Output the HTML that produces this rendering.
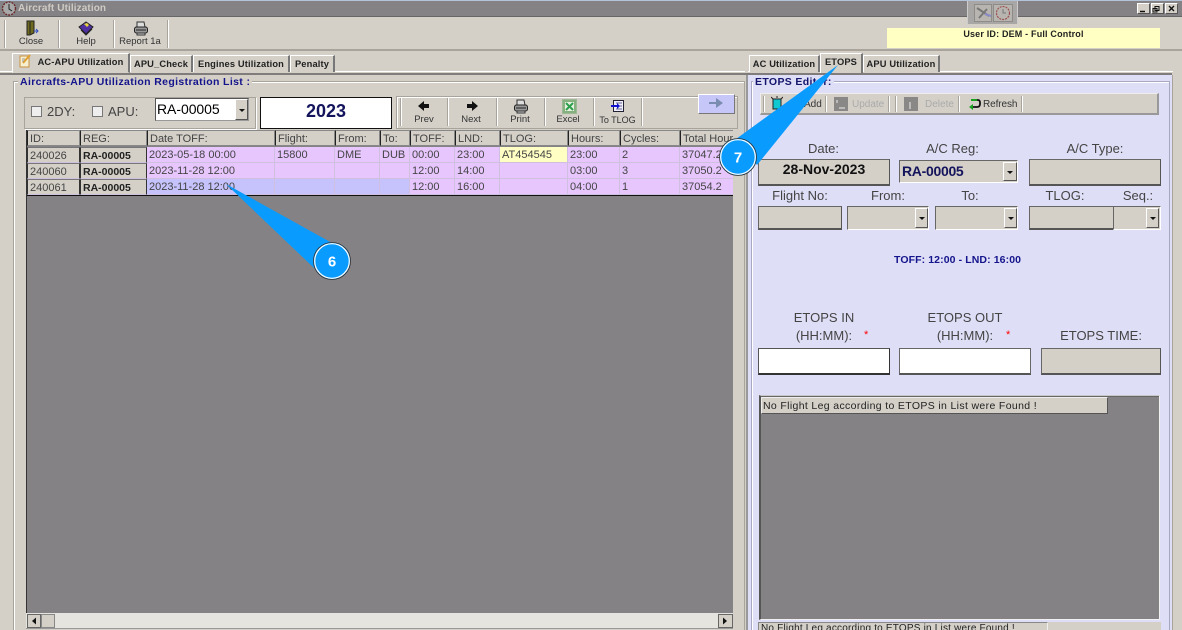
<!DOCTYPE html>
<html><head><meta charset="utf-8"><style>
html,body{margin:0;padding:0;width:1182px;height:630px;overflow:hidden}
body{background:#d4d0c8;font-family:"Liberation Sans",sans-serif;color:#333}
#w{position:absolute;left:0;top:0;width:1182px;height:630px;overflow:hidden;background:#d4d0c8}
div,svg{position:absolute}
.t{white-space:nowrap;line-height:12px}
.tb{font-size:9.5px;color:#333;text-align:center;white-space:nowrap;line-height:12px}
.tab{font-size:9.3px;font-weight:bold;color:#222;white-space:nowrap;background:#d4d0c8;border-top:1px solid #fff;border-left:1px solid #fff;border-right:2px solid #777;box-sizing:border-box;text-align:center;line-height:17px;letter-spacing:.15px}
.sep{width:1px;background:#a8a49c;border-right:1px solid #fff}
.h{top:130px;height:16px;background:#d4d0c8;font-size:11px;line-height:16px;color:#444;padding-left:2px;box-sizing:border-box;border-top:1px solid #888;border-left:1px solid #222;border-bottom:1px solid #888;border-right:1px solid #888;white-space:nowrap;overflow:hidden}
.c{height:16px;font-size:11px;line-height:16px;color:#444;padding-left:2px;box-sizing:border-box;background:#e6c6fd;border-right:1px solid #d0c0e0;border-bottom:1px solid #d0c0e0;white-space:nowrap;overflow:hidden}
.g{background:#d4d0c8;border-top:1px solid #777;border-left:1px solid #333;border-right:1px solid #333}
.l{font-size:13px;color:#444;white-space:nowrap;line-height:14px;text-align:center}
.box{background:#d4d0c8;border:1px solid #666;border-right-color:#555;border-bottom:2px solid #555;box-sizing:border-box}
.cb{background:#d4d0c8;border-top:1px solid #666;border-left:1px solid #666;border-right:1px solid #fff;border-bottom:1px solid #fff;box-sizing:border-box}
.ar{background:#d4d0c8;border-top:1px solid #fff;border-left:1px solid #fff;border-right:1px solid #555;border-bottom:1px solid #555;box-sizing:border-box}
.ar:after{content:"";position:absolute;left:50%;top:50%;margin-left:-3px;margin-top:-1px;border-left:3px solid transparent;border-right:3px solid transparent;border-top:3px solid #111}
.wb{background:#d4d0c8;border-top:1px solid #fff;border-left:1px solid #fff;border-right:1px solid #555;border-bottom:1px solid #555;box-sizing:border-box}
</style></head><body><div id="w">
<!-- title bar -->
<div style="left:0;top:0;width:1182px;height:1px;background:#b4c4d8"></div>
<div style="left:0;top:1px;width:1182px;height:15px;background:#848284"></div>
<div style="left:0;top:16px;width:1182px;height:1px;background:#666"></div>
<svg style="left:1px;top:1px" width="16" height="15" viewBox="0 0 16 15"><circle cx="8" cy="7.5" r="6.5" fill="#a8a8a8" stroke="#6a2a2a" stroke-width="1.4" stroke-dasharray="2 1"/><path d="M8 3V8L11 10" stroke="#222" fill="none"/></svg>
<div class="t" style="left:18px;top:3px;font-size:10px;font-weight:bold;color:#cfcbc4;letter-spacing:.1px">Aircraft Utilization</div>
<div style="left:967px;top:1px;width:51px;height:23px;background:#a9a7a6;border-right:1px solid #ccc;border-left:1px solid #ccc;box-sizing:border-box"></div>
<div style="left:974px;top:4px;width:18px;height:18px;background:#b8b5b0;border:1px solid #8e8c88;box-sizing:border-box"></div>
<div style="left:993px;top:4px;width:20px;height:18px;background:#b8b5b0;border:1px solid #8e8c88;box-sizing:border-box"></div>
<svg style="left:975px;top:5px" width="40" height="16" viewBox="0 0 40 16"><path d="M2 3L14 11M12 4L4 13" stroke="#777" stroke-width="2"/><path d="M10 9L16 11" stroke="#8a8ac8" stroke-width="2"/><circle cx="28" cy="8" r="6.5" fill="none" stroke="#9a5050" stroke-width="1.2" stroke-dasharray="2 1"/><path d="M28 4V8H31" stroke="#777" fill="none"/></svg>
<div class="wb" style="left:1137px;top:3px;width:13px;height:11px"></div>
<div class="wb" style="left:1151px;top:3px;width:13px;height:11px"></div>
<div class="wb" style="left:1165px;top:3px;width:13px;height:11px"></div>
<svg style="left:1137px;top:3px" width="41" height="11" viewBox="0 0 41 11"><path d="M3 8.5H8" stroke="#111" stroke-width="1.5"/><path d="M18 3.5h4v4h-4zM16 5.5h4v3.5h-4z" fill="#d4d0c8" stroke="#111"/><path d="M32 3L37 8M37 3L32 8" stroke="#111" stroke-width="1.4"/></svg>

<!-- main toolbar -->
<div class="sep" style="left:4px;top:20px;height:28px"></div>
<div class="sep" style="left:58px;top:20px;height:28px"></div>
<div class="sep" style="left:113px;top:20px;height:28px"></div>
<div class="sep" style="left:167px;top:20px;height:28px"></div>
<svg style="left:24px;top:20px" width="15" height="16" viewBox="0 0 15 16"><path d="M3 1H10V13L6 15H3Z" fill="#6e6a20" stroke="#222"/><path d="M6 2V14" stroke="#222"/><path d="M10 11L14 11M12 9L14 11L12 13" stroke="#3050c0" fill="none"/></svg>
<svg style="left:78px;top:21px" width="16" height="15" viewBox="0 0 16 15"><path d="M1 6L8 1L15 6L8 13Z" fill="#5030a0" stroke="#222"/><path d="M6 3L9 6L11 4L9 2Z" fill="#e8d040"/><path d="M3 9L8 14L14 8" stroke="#222" fill="none"/></svg>
<svg style="left:133px;top:21px" width="16" height="15" viewBox="0 0 16 15"><path d="M4 1H11L12 6H4Z" fill="#ddd" stroke="#333"/><rect x="1.500" y="6" width="13" height="6" rx="2" fill="#999" stroke="#222"/><path d="M3 9H13" stroke="#222"/><path d="M4 12H12V14H4Z" fill="#ccc" stroke="#333"/></svg>
<div class="tb" style="left:15px;top:36px;width:32px">Close</div>
<div class="tb" style="left:70px;top:36px;width:32px">Help</div>
<div class="tb" style="left:114px;top:36px;width:52px">Report 1a</div>
<div style="left:0;top:49px;width:1182px;height:2px;background:#a8a49c"></div>
<div style="left:887px;top:28px;width:273px;height:20px;background:#ffffc4"></div>
<div class="t" style="left:887px;top:28px;width:273px;text-align:center;font-size:9px;font-weight:bold;color:#222;letter-spacing:.18px">User ID: DEM - Full Control</div>

<!-- lines -->
<div style="left:0;top:71px;width:745px;height:1px;background:#fff"></div>
<div style="left:0;top:73px;width:1172px;height:2px;background:#807c7c"></div>
<div style="left:748px;top:71px;width:425px;height:1px;background:#fff"></div>

<!-- left tabs -->
<div class="tab" style="left:12px;top:53px;width:118px;height:20px;border-bottom:1px solid #d4d0c8;padding-left:20px;line-height:16px">AC-APU Utilization</div>
<svg style="left:19px;top:54px" width="13" height="14" viewBox="0 0 13 14"><rect x="1" y="2" width="9" height="11" fill="#f6efd0" stroke="#c89040"/><path d="M4 9L11 1" stroke="#e0a030" stroke-width="2"/><path d="M3 5H6M3 7H5" stroke="#999"/></svg>
<div class="tab" style="left:130px;top:55px;width:63px;height:17px">APU_Check</div>
<div class="tab" style="left:193px;top:55px;width:97px;height:17px">Engines Utilization</div>
<div class="tab" style="left:290px;top:55px;width:45px;height:17px">Penalty</div>

<!-- right tabs -->
<div class="tab" style="left:749px;top:55px;width:71px;height:17px">AC Utilization</div>
<div class="tab" style="left:820px;top:53px;width:43px;height:20px;line-height:16px">ETOPS</div>
<div class="tab" style="left:863px;top:55px;width:77px;height:17px">APU Utilization</div>

<!-- left group -->
<div style="left:13px;top:81px;width:732px;height:560px;border:1px solid #a8a49c;box-sizing:border-box;box-shadow:inset 1px 1px 0 #fff"></div>
<div class="t" style="left:18px;top:76px;padding:0 2px;background:#d4d0c8;font-size:10.5px;font-weight:bold;color:#14148c;letter-spacing:.36px;line-height:13px">Aircrafts-APU Utilization Registration List :</div>

<!-- filter panel -->
<div style="left:24px;top:97px;width:232px;height:32px;border:1px solid #a8a49c;box-sizing:border-box;box-shadow:1px 1px 0 #fff"></div>
<div style="left:31px;top:106px;width:11px;height:11px;background:#eee;border:1px solid #777;box-sizing:border-box"></div>
<div class="l" style="left:47px;top:105px">2DY:</div>
<div style="left:92px;top:106px;width:11px;height:11px;background:#eee;border:1px solid #777;box-sizing:border-box"></div>
<div class="l" style="left:108px;top:105px">APU:</div>
<div style="left:155px;top:98px;width:94px;height:23px;background:#fff;border-top:1px solid #555;border-left:1px solid #555;border-right:1px solid #999;border-bottom:1px solid #999;box-sizing:border-box"></div>
<div class="t" style="left:157px;top:102px;font-size:14px;line-height:14px;color:#000;letter-spacing:-.05px">RA-00005</div>
<div class="ar" style="left:235px;top:99px;width:13px;height:21px"></div>
<div style="left:260px;top:97px;width:132px;height:32px;background:#fff;border:1px solid #111;box-sizing:border-box"></div>
<div class="t" style="left:260px;top:101px;width:132px;text-align:center;font-size:18px;line-height:20px;font-weight:bold;color:#14145c">2023</div>

<!-- nav toolbar -->
<div style="left:396px;top:96px;width:342px;height:33px;border:1px solid #a8a49c;box-sizing:border-box;box-shadow:inset 1px 1px 0 #fff"></div>
<div class="sep" style="left:400px;top:98px;height:28px"></div>
<div class="sep" style="left:447px;top:98px;height:28px"></div>
<div class="sep" style="left:496px;top:98px;height:28px"></div>
<div class="sep" style="left:544px;top:98px;height:28px"></div>
<div class="sep" style="left:593px;top:98px;height:28px"></div>
<div class="sep" style="left:641px;top:98px;height:28px"></div>
<svg style="left:418px;top:100px" width="12" height="12" viewBox="0 0 12 12"><path d="M0 6L6 1V4H11V8H6V11Z" fill="#111"/></svg>
<svg style="left:466px;top:100px" width="12" height="12" viewBox="0 0 12 12"><path d="M12 6L6 1V4H1V8H6V11Z" fill="#111"/></svg>
<svg style="left:513px;top:99px" width="16" height="15" viewBox="0 0 16 15"><path d="M4 1H11L12 6H4Z" fill="#ddd" stroke="#333"/><rect x="1.500" y="6" width="13" height="6" rx="2" fill="#999" stroke="#222"/><path d="M3 9H13" stroke="#222"/><path d="M4 12H12V14H4Z" fill="#ccc" stroke="#333"/></svg>
<svg style="left:562px;top:99px" width="15" height="15" viewBox="0 0 15 15"><rect x=".5" y=".5" width="14" height="14" fill="#86b080" stroke="#9cb894"/><rect x="3" y="3" width="9" height="9" fill="#e8f0e0"/><path d="M4 4L11 11M11 4L4 11" stroke="#2ca04c" stroke-width="2"/></svg>
<svg style="left:611px;top:100px" width="13" height="13" viewBox="0 0 13 13"><rect x="2.500" y=".5" width="10" height="11" fill="#eef" stroke="#223"/><path d="M5 3H11M5 6H11M5 9H11" stroke="#668"/><path d="M0 5H6V3L9 6L6 9V7H0Z" fill="#1010d0"/></svg>
<div class="tb" style="left:408px;top:114px;width:32px">Prev</div>
<div class="tb" style="left:455px;top:114px;width:32px">Next</div>
<div class="tb" style="left:504px;top:114px;width:32px">Print</div>
<div class="tb" style="left:552px;top:114px;width:32px">Excel</div>
<div class="tb" style="left:594px;top:114px;width:47px;font-size:9px">To TLOG</div>
<div style="left:698px;top:94px;width:37px;height:20px;background:#c6c6f8;border-top:1px solid #fff;border-left:1px solid #fff;border-right:1px solid #777;border-bottom:1px solid #777;box-sizing:border-box"></div>
<svg style="left:709px;top:98px" width="15" height="10" viewBox="0 0 15 10"><path d="M0 4H7V0L14 5L7 10V6H0Z" fill="#7a8cb0"/></svg>

<!-- grid -->
<div style="left:26px;top:130px;width:707px;height:484px;background:#848284;border-left:1px solid #333;box-sizing:border-box"></div>
<div class="h" style="left:27px;width:53px">ID:</div>
<div class="h" style="left:80px;width:67px">REG:</div>
<div class="h" style="left:147px;width:128px">Date TOFF:</div>
<div class="h" style="left:275px;width:60px">Flight:</div>
<div class="h" style="left:335px;width:45px">From:</div>
<div class="h" style="left:380px;width:30px">To:</div>
<div class="h" style="left:410px;width:45px">TOFF:</div>
<div class="h" style="left:455px;width:45px">LND:</div>
<div class="h" style="left:500px;width:68px">TLOG:</div>
<div class="h" style="left:568px;width:52px">Hours:</div>
<div class="h" style="left:620px;width:60px">Cycles:</div>
<div class="h" style="left:680px;width:53px;border-right:0">Total Hours:</div>

<!-- row 1 -->
<div class="c g" style="left:27px;top:147px;width:53px">240026</div>
<div class="c g" style="left:80px;top:147px;width:67px;font-weight:bold;color:#222;font-size:10.5px">RA-00005</div>
<div class="c" style="left:147px;top:147px;width:128px">2023-05-18 00:00</div>
<div class="c" style="left:275px;top:147px;width:60px">15800</div>
<div class="c" style="left:335px;top:147px;width:45px">DME</div>
<div class="c" style="left:380px;top:147px;width:30px">DUB</div>
<div class="c" style="left:410px;top:147px;width:45px">00:00</div>
<div class="c" style="left:455px;top:147px;width:45px">23:00</div>
<div class="c" style="left:500px;top:147px;width:68px;background:#ffffc4">AT454545</div>
<div class="c" style="left:568px;top:147px;width:52px">23:00</div>
<div class="c" style="left:620px;top:147px;width:60px">2</div>
<div class="c" style="left:680px;top:147px;width:53px;border-right:0">37047.2</div>
<!-- row 2 -->
<div class="c g" style="left:27px;top:163px;width:53px">240060</div>
<div class="c g" style="left:80px;top:163px;width:67px;font-weight:bold;color:#222;font-size:10.5px">RA-00005</div>
<div class="c" style="left:147px;top:163px;width:128px">2023-11-28 12:00</div>
<div class="c" style="left:275px;top:163px;width:60px"></div>
<div class="c" style="left:335px;top:163px;width:45px"></div>
<div class="c" style="left:380px;top:163px;width:30px"></div>
<div class="c" style="left:410px;top:163px;width:45px">12:00</div>
<div class="c" style="left:455px;top:163px;width:45px">14:00</div>
<div class="c" style="left:500px;top:163px;width:68px"></div>
<div class="c" style="left:568px;top:163px;width:52px">03:00</div>
<div class="c" style="left:620px;top:163px;width:60px">3</div>
<div class="c" style="left:680px;top:163px;width:53px;border-right:0">37050.2</div>
<!-- row 3 -->
<div class="c g" style="left:27px;top:179px;width:53px">240061</div>
<div class="c g" style="left:80px;top:179px;width:67px;font-weight:bold;color:#222;font-size:10.5px">RA-00005</div>
<div class="c" style="left:147px;top:179px;width:128px;background:#c6c2fb">2023-11-28 12:00</div>
<div class="c" style="left:275px;top:179px;width:60px;background:#c6c2fb"></div>
<div class="c" style="left:335px;top:179px;width:45px;background:#c6c2fb"></div>
<div class="c" style="left:380px;top:179px;width:30px;background:#c6c2fb"></div>
<div class="c" style="left:410px;top:179px;width:45px">12:00</div>
<div class="c" style="left:455px;top:179px;width:45px">16:00</div>
<div class="c" style="left:500px;top:179px;width:68px"></div>
<div class="c" style="left:568px;top:179px;width:52px">04:00</div>
<div class="c" style="left:620px;top:179px;width:60px">1</div>
<div class="c" style="left:680px;top:179px;width:53px;border-right:0">37054.2</div>
<div style="left:27px;top:195px;width:706px;height:1px;background:#111"></div>

<!-- h scrollbar -->
<div style="left:26px;top:613px;width:707px;height:15px;background:#e6e4df"></div>
<div style="left:26px;top:628px;width:707px;height:1px;background:#999"></div>
<div style="left:27px;top:614px;width:14px;height:14px;background:#d4d0c8;border:1px solid #666;box-sizing:border-box"></div>
<div style="left:41px;top:614px;width:14px;height:14px;background:#d4d0c8;border:1px solid #888;box-sizing:border-box"></div>
<div style="left:718px;top:614px;width:15px;height:14px;background:#d4d0c8;border:1px solid #666;box-sizing:border-box"></div>
<svg style="left:27px;top:614px" width="706" height="14" viewBox="0 0 706 14"><path d="M9 3.500V10.500L5 7Z" fill="#111"/><path d="M696 3.500V10.500L700 7Z" fill="#111"/></svg>

<!-- right panel -->
<div style="left:746px;top:75px;width:427px;height:555px;background:#dedef7;border-left:2px solid #999;border-right:1px solid #a8a49c;box-sizing:border-box"></div>
<div style="left:751px;top:81px;width:419px;height:560px;border:1px solid #a8a8c0;box-sizing:border-box;box-shadow:inset 1px 1px 0 #fff"></div>
<div class="t" style="left:753px;top:76px;padding:0 2px;background:#dedef7;font-size:10.5px;font-weight:bold;color:#14146c;letter-spacing:.35px;line-height:13px">ETOPS Editor:</div>

<!-- right toolbar -->
<div style="left:760px;top:93px;width:399px;height:22px;background:#d4d0c8;border-right:2px solid #999;border-bottom:2px solid #999;border-top:1px solid #eee;border-left:1px solid #eee;box-sizing:border-box"></div>
<div class="sep" style="left:763px;top:96px;height:16px"></div>
<div class="sep" style="left:825px;top:96px;height:16px"></div>
<div class="sep" style="left:888px;top:96px;height:16px"></div>
<div class="sep" style="left:895px;top:96px;height:16px"></div>
<div class="sep" style="left:958px;top:96px;height:16px"></div>
<div class="sep" style="left:1021px;top:96px;height:16px"></div>
<svg style="left:771px;top:96px" width="12" height="15" viewBox="0 0 12 15"><rect x="2" y="3" width="8" height="10" fill="#10c8d0" stroke="#222"/><path d="M2 3L0 1M10 3L12 1M6 2V0" stroke="#222"/></svg>
<div style="left:834px;top:97px;width:14px;height:14px;background:#8a8886"></div>
<div style="left:904px;top:97px;width:14px;height:14px;background:#8a8886"></div>
<svg style="left:834px;top:97px" width="84" height="14" viewBox="0 0 84 14"><path d="M3 3V6M5 11H11" stroke="#eee"/><path d="M76 5V12" stroke="#eee"/></svg>
<svg style="left:968px;top:98px" width="13" height="12" viewBox="0 0 13 12"><path d="M3 2H10Q12 2 12 5V6Q12 9 9 9H4" fill="none" stroke="#111" stroke-width="1.800"/><path d="M3 2H9" stroke="#18a020" stroke-width="2"/><path d="M5 6L1 9L5 12Z" fill="#18a020"/></svg>
<div class="t" style="left:804px;top:99px;font-size:10px;color:#333">Add</div>
<div class="t" style="left:852px;top:99px;font-size:10px;color:#aaa">Update</div>
<div class="t" style="left:925px;top:99px;font-size:10px;color:#aaa">Delete</div>
<div class="t" style="left:983px;top:99px;font-size:10px;color:#333;letter-spacing:-.1px">Refresh</div>

<!-- form -->
<div class="l" style="left:758px;top:142px;width:131px">Date:</div>
<div class="l" style="left:899px;top:142px;width:107px">A/C Reg:</div>
<div class="l" style="left:1029px;top:142px;width:132px">A/C Type:</div>
<div class="box" style="left:758px;top:159px;width:132px;height:27px"></div>
<div class="t" style="left:758px;top:162px;width:132px;text-align:center;font-size:14px;line-height:14px;font-weight:bold;color:#111">28-Nov-2023</div>
<div class="cb" style="left:899px;top:160px;width:119px;height:23px"></div>
<div class="t" style="left:902px;top:164px;font-size:14px;line-height:14px;font-weight:bold;color:#14145c;letter-spacing:-.3px">RA-00005</div>
<div class="ar" style="left:1003px;top:162px;width:14px;height:19px"></div>
<div class="box" style="left:1029px;top:159px;width:132px;height:27px"></div>

<div class="l" style="left:758px;top:189px;width:84px">Flight No:</div>
<div class="l" style="left:847px;top:189px;width:82px">From:</div>
<div class="l" style="left:935px;top:189px;width:70px">To:</div>
<div class="l" style="left:1029px;top:189px;width:72px">TLOG:</div>
<div class="l" style="left:1113px;top:189px;width:50px">Seq.:</div>
<div class="box" style="left:758px;top:206px;width:84px;height:24px"></div>
<div class="cb" style="left:847px;top:206px;width:82px;height:24px"></div>
<div class="ar" style="left:915px;top:208px;width:13px;height:20px"></div>
<div class="cb" style="left:935px;top:206px;width:83px;height:24px"></div>
<div class="ar" style="left:1004px;top:208px;width:13px;height:20px"></div>
<div class="box" style="left:1029px;top:206px;width:85px;height:24px"></div>
<div class="cb" style="left:1113px;top:206px;width:48px;height:24px"></div>
<div class="ar" style="left:1146px;top:208px;width:13px;height:20px"></div>

<div class="t" style="left:894px;top:254px;font-size:10.5px;font-weight:bold;color:#14148c;letter-spacing:.1px">TOFF: 12:00 - LND: 16:00</div>

<div class="l" style="left:758px;top:311px;width:132px">ETOPS IN</div>
<div class="l" style="left:758px;top:329px;width:132px">(HH:MM):</div>
<div class="t" style="left:864px;top:329px;font-size:11px;color:#f00">*</div>
<div class="l" style="left:899px;top:311px;width:132px">ETOPS OUT</div>
<div class="l" style="left:899px;top:329px;width:132px">(HH:MM):</div>
<div class="t" style="left:1006px;top:329px;font-size:11px;color:#f00">*</div>
<div class="l" style="left:1041px;top:329px;width:120px">ETOPS TIME:</div>
<div style="left:758px;top:348px;width:132px;height:27px;background:#fff;border:1px solid #555;border-bottom:2px solid #333;border-right-color:#333;box-sizing:border-box"></div>
<div style="left:899px;top:348px;width:132px;height:27px;background:#fff;border:1px solid #666;border-bottom:2px solid #555;box-sizing:border-box"></div>
<div class="box" style="left:1041px;top:348px;width:120px;height:27px"></div>

<!-- list -->
<div style="left:759px;top:395px;width:401px;height:225px;background:#848284;border:1px solid #f0f0f0;border-top-color:#c8c8c8;border-left:2px solid #555;box-sizing:border-box;box-shadow:inset 0 1px 0 #666"></div>
<div style="left:761px;top:397px;width:347px;height:17px;background:#d4d0c8;border-top:1px solid #eee;border-left:1px solid #eee;border-right:1px solid #555;border-bottom:1px solid #555;box-sizing:border-box"></div>
<div class="t" style="left:763px;top:400px;font-size:10.5px;color:#222;letter-spacing:.35px">No Flight Leg according to ETOPS in List were Found !</div>
<div style="left:758px;top:622px;width:403px;height:8px;background:#d4d0c8"></div>
<div style="left:758px;top:622px;width:290px;height:8px;background:#d4d0c8;border-top:1px solid #888;border-left:1px solid #888;border-right:1px solid #eee;box-sizing:border-box;overflow:hidden"><div class="t" style="left:2px;top:0;font-size:10px;color:#222;letter-spacing:.2px">No Flight Leg according to ETOPS in List were Found !</div></div>

<!-- callouts -->
<svg style="left:0;top:0" width="1182" height="630" viewBox="0 0 1182 630">
<path d="M226 184L332 243L314 268Z" fill="#0a9bff"/>
<circle cx="332" cy="261" r="18.500" fill="#0a9bff" stroke="#333" stroke-width=".8"/>
<circle cx="332" cy="261" r="17.300" fill="none" stroke="#fff" stroke-width="1.200"/>
<path d="M838 65L736 139L757 165Z" fill="#0a9bff"/>
<circle cx="738" cy="157" r="18.500" fill="#0a9bff" stroke="#333" stroke-width=".8"/>
<circle cx="738" cy="157" r="17.300" fill="none" stroke="#fff" stroke-width="1.200"/>
<text x="332" y="266.500" text-anchor="middle" font-family="Liberation Sans" font-weight="bold" font-size="15" fill="#fff">6</text>
<text x="738" y="162.500" text-anchor="middle" font-family="Liberation Sans" font-weight="bold" font-size="15" fill="#fff">7</text>
</svg>
</div></body></html>
